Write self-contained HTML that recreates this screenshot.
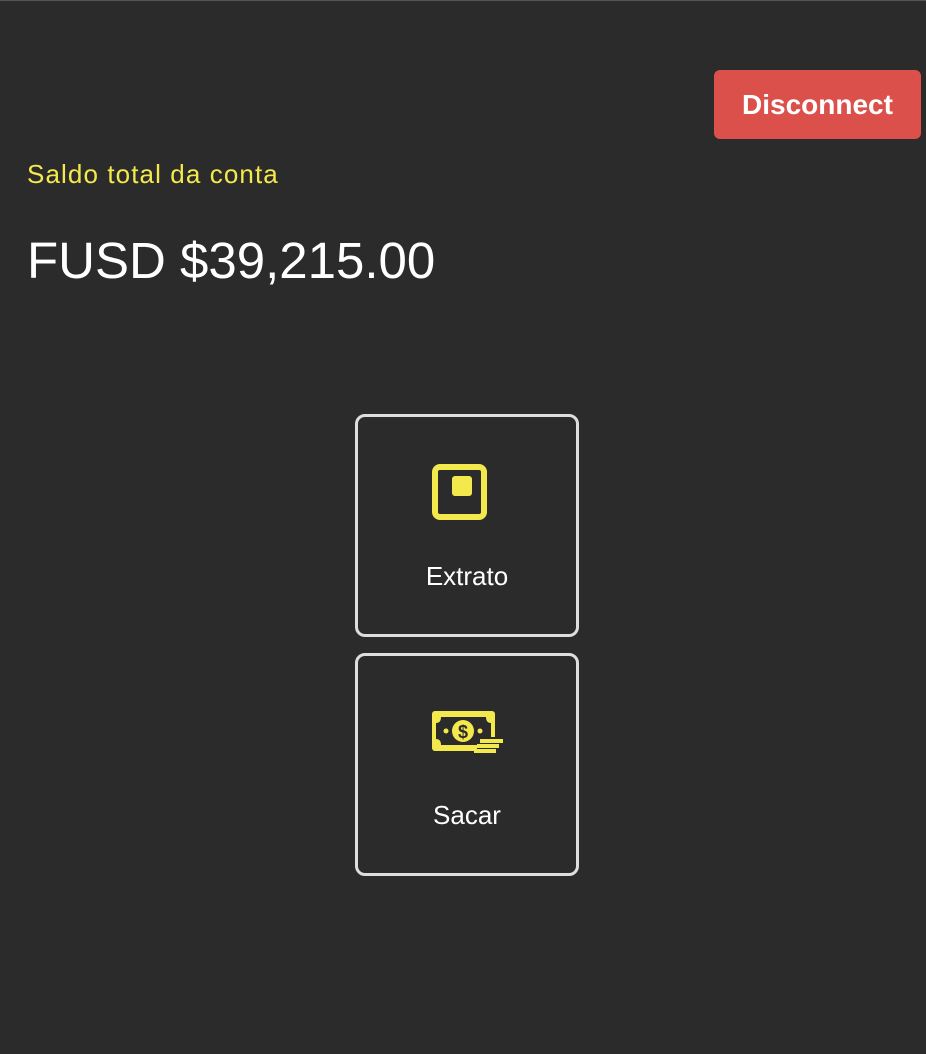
<!DOCTYPE html>
<html><head><style>
html,body{margin:0;padding:0;}
body{width:926px;height:1054px;background:#2b2b2b;position:relative;overflow:hidden;font-family:"Liberation Sans",sans-serif;border-top:1px solid #555;box-sizing:border-box;}
.btn{position:absolute;left:714px;top:69px;width:207px;height:69px;background:#dc504c;border-radius:6px;color:#fff;font-weight:bold;font-size:28px;line-height:69px;text-align:center;}
.lbl{position:absolute;left:27px;top:158px;color:#f4e94c;font-size:26px;letter-spacing:1.1px;}
.bal{position:absolute;left:27px;top:230px;color:#fff;font-size:51px;}
.card{position:absolute;left:355px;width:224px;height:223px;border:3px solid #dedede;border-radius:10px;box-sizing:border-box;}
.card span{position:absolute;left:0;right:0;text-align:center;color:#fff;font-size:26px;}
</style></head><body>
<div class="btn">Disconnect</div>
<div class="lbl">Saldo total da conta</div>
<div class="bal">FUSD $39,215.00</div>
<div class="card" style="top:413px">
<svg style="position:absolute;left:71px;top:44px" width="60" height="60" viewBox="0 0 60 60">
<rect x="6" y="6" width="49" height="50" rx="5" fill="none" stroke="#f4e94c" stroke-width="6"/>
<rect x="23" y="15" width="20" height="20" rx="3" fill="#f4e94c"/>
</svg>
<span style="top:144px">Extrato</span>
</div>
<div class="card" style="top:652px">
<svg style="position:absolute;left:73px;top:53px" width="74" height="46" viewBox="0 0 74 46">
<rect x="1" y="2" width="63" height="40" rx="3" fill="#f4e94c"/>
<path d="M10 8 H55 Q55 14 60 14 V30 Q55 30 55 36 H10 Q10 30 5 30 V14 Q10 14 10 8Z" fill="#2b2b2b"/>
<circle cx="32" cy="22" r="11" fill="#f4e94c"/>
<text x="32" y="29" text-anchor="middle" font-family="Liberation Sans" font-weight="bold" font-size="18" fill="#2b2b2b">$</text>
<circle cx="15" cy="22" r="2.5" fill="#f4e94c"/><circle cx="49" cy="22" r="2.5" fill="#f4e94c"/>
<rect x="46" y="28" width="27" height="17" fill="#2b2b2b"/>
<rect x="49" y="30" width="23" height="4" fill="#f4e94c"/>
<rect x="46" y="35" width="22" height="4" fill="#f4e94c"/>
<rect x="43" y="40" width="22" height="4" fill="#f4e94c"/>
</svg>
<span style="top:144px">Sacar</span>
</div>
</body></html>
